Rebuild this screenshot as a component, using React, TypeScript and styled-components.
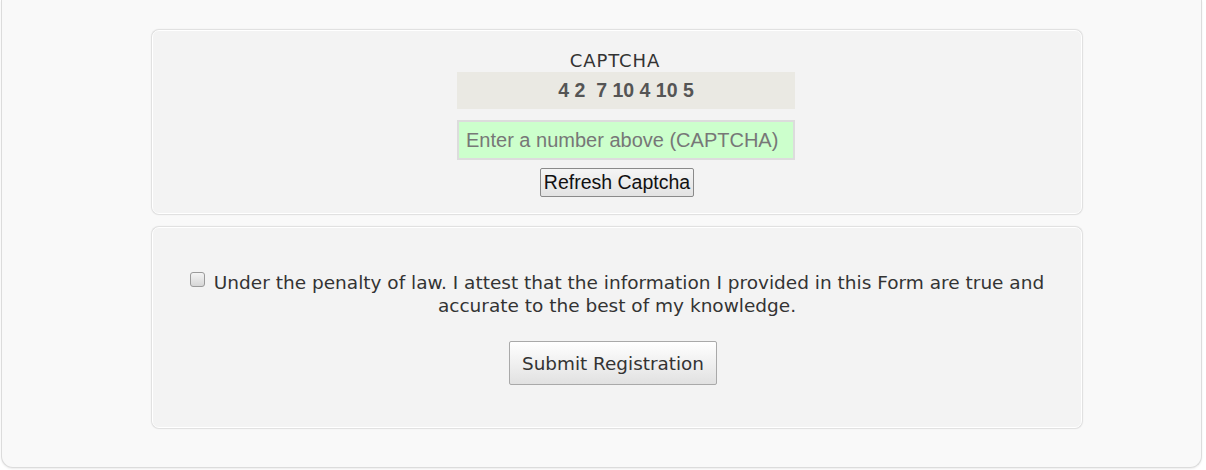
import React from 'react';
import styled, { createGlobalStyle } from 'styled-components';

const GlobalStyle = createGlobalStyle`
  html, body {
    margin: 0;
    padding: 0;
    background: #ffffff;
  }
  body {
    font-family: "Century Gothic", "DejaVu Sans", sans-serif;
    color: #333;
  }
`;

const Card = styled.div`
  box-sizing: border-box;
  width: 1201px;
  margin: 0 0 2px 1px;
  padding: 30px 119px 39px 150px;
  background: #f9f9f9;
  border: 1px solid #dcdcdc;
  border-top: none;
  border-radius: 0 0 12px 12px;
  box-shadow: 0 1px 2px rgba(0, 0, 0, 0.08);
  display: flex;
  flex-direction: column;
  gap: 13px;
`;

const Panel = styled.div<{ $top: number; $bottom: number }>`
  box-sizing: border-box;
  background: #f3f3f3;
  border: 1px solid #ffffff;
  border-radius: 7px;
  box-shadow: 0 0 1px 1px #dedede;
  padding: ${(p) => p.$top}px 20px ${(p) => p.$bottom}px;
  display: flex;
  flex-direction: column;
  align-items: center;
`;

const Label = styled.div`
  font-size: 18px;
  line-height: 20px;
  color: #333;
  letter-spacing: 0.9px;
  margin-left: -4px;
`;

const CodeBox = styled.div`
  width: 338px;
  height: 37px;
  margin: 1px 0 0 18px;
  background: #eae9e3;
  display: flex;
  align-items: center;
  justify-content: center;
  font-family: "Liberation Sans", Arial, sans-serif;
  font-weight: bold;
  font-size: 19.5px;
  color: #555;
  white-space: pre;
`;

const CodeInput = styled.input`
  box-sizing: border-box;
  width: 338px;
  height: 40px;
  margin: 11px 0 0 18px;
  padding: 0 7px;
  background: #ccffcc;
  border: 2px solid #dcdcdc;
  font-family: "Liberation Sans", Arial, sans-serif;
  font-size: 20px;
  color: #333;
  outline: none;
  &::placeholder {
    color: #777;
  }
`;

const PlainButton = styled.button`
  box-sizing: border-box;
  margin-top: 8px;
  height: 29px;
  padding: 0 3px;
  font-family: "Liberation Sans", Arial, sans-serif;
  font-size: 19.5px;
  color: #111;
  background: linear-gradient(#f5f5f5, #e3e3e3);
  border: 1px solid #8a8a8a;
  border-radius: 2px;
`;

const Attest = styled.label`
  display: block;
  text-align: center;
  font-size: 18.5px;
  line-height: 23px;
  color: #333;
  max-width: 880px;
`;

const Check = styled.input`
  appearance: none;
  box-sizing: border-box;
  width: 15px;
  height: 15px;
  margin: 0 9px 0 0;
  vertical-align: 2px;
  border: 1px solid #9a9a9a;
  border-radius: 3px;
  background: linear-gradient(#f4f4f4, #d6d6d6);
`;

const SubmitButton = styled.button`
  box-sizing: border-box;
  margin: 24px 8px 0 0;
  width: 208px;
  height: 44px;
  font-family: "Century Gothic", "DejaVu Sans", sans-serif;
  font-size: 18.4px;
  color: #333;
  background: linear-gradient(#ffffff, #e1e1e1);
  border: 1px solid #a9a9a9;
  border-radius: 2px;
`;

const App: React.FC = function (): JSX.Element {
  return (
    <>
      <GlobalStyle />
      <Card>
        <Panel $top={20} $bottom={16}>
          <Label>CAPTCHA</Label>
          <CodeBox>{'4 2  7 10 4 10 5'}</CodeBox>
          <CodeInput placeholder="Enter a number above (CAPTCHA)" />
          <PlainButton>Refresh Captcha</PlainButton>
        </Panel>
        <Panel $top={43} $bottom={42}>
          <Attest>
            <Check type="checkbox" />
            Under the penalty of law. I attest that the information I provided in this Form are true and accurate to the best of my knowledge.
          </Attest>
          <SubmitButton>Submit Registration</SubmitButton>
        </Panel>
      </Card>
    </>
  );
};

export default App;
